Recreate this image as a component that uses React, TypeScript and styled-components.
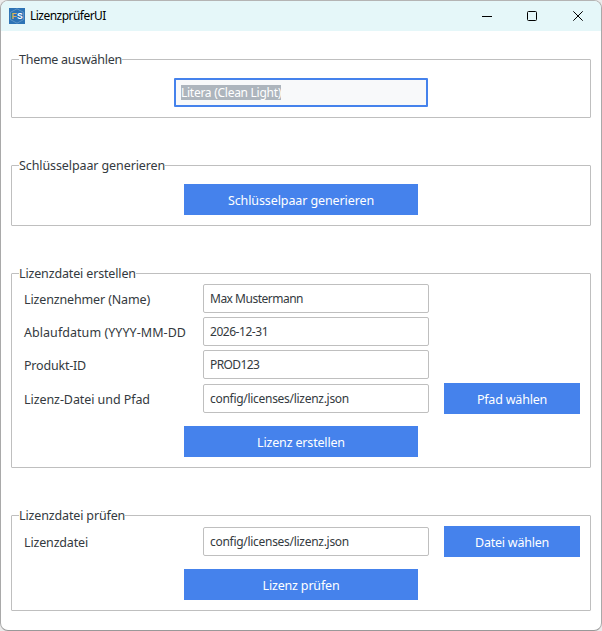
import React from 'react';
import styled, { createGlobalStyle } from 'styled-components';

const GlobalStyle = createGlobalStyle`
  * { box-sizing: border-box; }
  body {
    margin: 0;
    overflow: hidden;
    background: #ebebeb;
    font-family: 'Noto Sans', 'Open Sans', sans-serif;
    font-size: 12.5px;
    color: #343a40;
  }
`;

const Window = styled.div`
  width: 602px;
  height: 631px;
  border: 1px solid #a9a9a9;
  border-top-color: #b4b4b4;
  border-bottom-color: #999;
  border-radius: 8px;
  overflow: hidden;
  background: #fff;
`;

const TitleBar = styled.header`
  display: flex;
  align-items: center;
  height: 30px;
  padding-left: 8px;
  background: #e5f7f9;
`;

const Title = styled.h1<{ $track: number }>`
  flex: 1;
  margin: 0 0 0 5px;
  font-size: 12px;
  font-weight: 400;
  line-height: 18px;
  letter-spacing: ${(p) => p.$track}px;
  color: #000;
`;

const WindowButton = styled.button<{ $shift?: number }>`
  display: flex;
  align-items: center;
  justify-content: center;
  width: 46px;
  height: 30px;
  padding: 0 0 0 ${(p) => p.$shift ?? 0}px;
  border: 0;
  background: none;
`;

const Content = styled.main`
  display: flex;
  flex-direction: column;
  gap: 47px;
  padding: 28px 10px 0;
`;

const Group = styled.section<{ $height: number }>`
  display: flex;
  flex-direction: column;
  height: ${(p) => p.$height}px;
  border: 1px solid #bfbfbf;
  border-radius: 1px;
`;

const Legend = styled.h2<{ $track: number }>`
  align-self: flex-start;
  flex: none;
  height: 18px;
  margin: -10px 0 0 7px;
  background: #fff;
  font-size: 12.5px;
  font-weight: 400;
  line-height: 20px;
  letter-spacing: ${(p) => p.$track}px;
  white-space: nowrap;
`;

const Combo = styled.div`
  display: flex;
  align-items: center;
  align-self: center;
  width: 254px;
  height: 29px;
  margin-top: 10px;
  padding-left: 5px;
  border: 2px solid #4582ec;
  border-radius: 1px;
  background: #f8f9fa;
`;

const Selected = styled.span<{ $track: number }>`
  height: 15px;
  background: #adb5bd;
  color: #fff;
  font-size: 12px;
  line-height: 15px;
  letter-spacing: ${(p) => p.$track}px;
`;

const Row = styled.div<{ $height: number }>`
  display: grid;
  grid-template-columns: 179px 226px 151px;
  align-items: center;
  height: ${(p) => p.$height}px;
  padding-left: 12px;

  & > button { margin-left: 15px; }
`;

const Label = styled.label<{ $track: number }>`
  line-height: 18px;
  padding-top: 3px;
  letter-spacing: ${(p) => p.$track}px;
  white-space: nowrap;
`;

const Input = styled.input<{ $track: number }>`
  width: 226px;
  height: 29px;
  padding: 0 6px;
  border: 1px solid #bfbfbf;
  border-radius: 2px;
  outline: 0;
  background: #fff;
  color: #343a40;
  font: 12px 'Noto Sans', sans-serif;
  letter-spacing: ${(p) => p.$track}px;
`;

const Button = styled.button<{ $track: number }>`
  width: 136px;
  height: 31px;
  padding: 2px 0 0;
  border: 0;
  background: #4582ec;
  color: #fff;
  font: 12.5px 'Noto Sans', sans-serif;
  letter-spacing: ${(p) => p.$track}px;
`;

const ActionButton = styled(Button)`
  align-self: center;
  flex: none;
  width: 234px;
  margin-top: 10px;
`;

const LogoText = styled.text`
  font: 700 8.5px 'Liberation Sans', sans-serif;
`;

const Logo = () => (
  <svg width="16" height="16" viewBox="0 0 16 16">
    <rect width="16" height="16" fill="#2d73b5" />
    <path d="M8 .8 14.6 4.4v7.2L8 15.2 1.4 11.6V4.4Z" fill="none" stroke="#82add3" strokeWidth=".6" />
    <LogoText x="2.4" y="11" fill="#d6b45a">F</LogoText>
    <LogoText x="7.9" y="11" fill="#fff">S</LogoText>
  </svg>
);

export default function App() {
  return (
    <>
      <GlobalStyle />
      <Window>
        <TitleBar>
          <Logo />
          <Title $track={-0.53}>LizenzprüferUI</Title>
          <WindowButton $shift={2} aria-label="Minimieren">
            <svg width="10" height="10"><path d="M0 5.5h10" stroke="#000" /></svg>
          </WindowButton>
          <WindowButton aria-label="Maximieren">
            <svg width="10" height="10"><rect x=".5" y=".5" width="9" height="9" rx="1" fill="none" stroke="#000" /></svg>
          </WindowButton>
          <WindowButton aria-label="Schließen">
            <svg width="10" height="10"><path d="m.3.3 9.4 9.4M9.7.3.3 9.7" stroke="#000" /></svg>
          </WindowButton>
        </TitleBar>
        <Content>
          <Group $height={59}>
            <Legend $track={-0.27}>Theme auswählen</Legend>
            <Combo><Selected $track={-0.27}>Litera (Clean Light)</Selected></Combo>
          </Group>
          <Group $height={61}>
            <Legend $track={-0.1}>Schlüsselpaar generieren</Legend>
            <ActionButton $track={-0.1}>Schlüsselpaar generieren</ActionButton>
          </Group>
          <Group $height={195}>
            <Legend $track={-0.15}>Lizenzdatei erstellen</Legend>
            <Row $height={33}>
              <Label $track={-0.14}>Lizenznehmer (Name)</Label>
              <Input $track={-0.5} defaultValue="Max Mustermann" />
            </Row>
            <Row $height={33}>
              <Label $track={0.05}>Ablaufdatum (YYYY-MM-DD</Label>
              <Input $track={-0.46} defaultValue="2026-12-31" />
            </Row>
            <Row $height={33}>
              <Label $track={-0.2}>Produkt-ID</Label>
              <Input $track={-0.6} defaultValue="PROD123" />
            </Row>
            <Row $height={35}>
              <Label $track={-0.07}>Lizenz-Datei und Pfad</Label>
              <Input $track={-0.29} defaultValue="config/licenses/lizenz.json" />
              <Button $track={-0.2}>Pfad wählen</Button>
            </Row>
            <ActionButton $track={-0.17}>Lizenz erstellen</ActionButton>
          </Group>
          <Group $height={96}>
            <Legend $track={-0.14}>Lizenzdatei prüfen</Legend>
            <Row $height={35}>
              <Label $track={-0.16}>Lizenzdatei</Label>
              <Input $track={-0.29} defaultValue="config/licenses/lizenz.json" />
              <Button $track={-0.23}>Datei wählen</Button>
            </Row>
            <ActionButton $track={-0.17}>Lizenz prüfen</ActionButton>
          </Group>
        </Content>
      </Window>
    </>
  );
}
